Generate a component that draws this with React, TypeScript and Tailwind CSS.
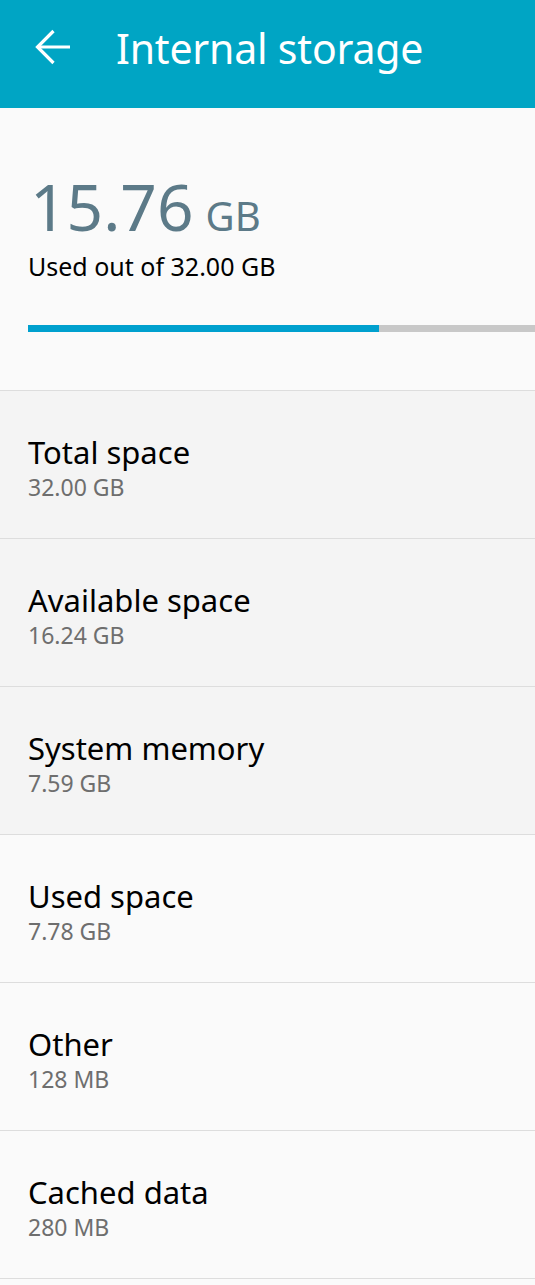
const rows = [
  { title: 'Total space', value: '32.00 GB', shaded: true },
  { title: 'Available space', value: '16.24 GB', shaded: true },
  { title: 'System memory', value: '7.59 GB', shaded: true },
  { title: 'Used space', value: '7.78 GB', shaded: false },
  { title: 'Other', value: '128 MB', shaded: false },
  { title: 'Cached data', value: '280 MB', shaded: false },
];

export default function App() {
  return (
    <div className="min-h-[1285px] w-[535px] bg-[#fafafa] font-['Noto_Sans',sans-serif]">
      <header className="h-[108px] bg-[#00a5c4] flex items-start text-white">
        <svg width="36" height="38" viewBox="0 0 36 38" className="mt-[28px] ml-[35px]" fill="none" stroke="currentColor" strokeWidth="3.2">
          <path d="M2 19H35" />
          <path d="M18.5 3L2.5 19L18.5 35" />
        </svg>
        <h1 className="ml-[45px] mt-[22px] text-[41px] leading-[52px] tracking-[-0.2px]">Internal storage</h1>
      </header>

      <section className="h-[282px] px-[28px] pt-[67px]">
        <div className="flex items-baseline gap-[12px] text-[#5c7a88] leading-none">
          <span className="text-[64px] ml-[2px]">15.76</span>
          <span className="text-[40px]">GB</span>
        </div>
        <p className="mt-[15px] text-[25px] text-black leading-none">Used out of 32.00 GB</p>
        <div className="mt-[46px] -mr-[28px] flex h-[7px]">
          <div className="w-[351px] bg-[#00a0ce]" />
          <div className="flex-1 bg-[#c8c8c8]" />
        </div>
      </section>

      <ul>
        {rows.map((r) => (
          <li
            key={r.title}
            className={`h-[148px] border-t border-[#dddddd] px-[28px] pt-[41px] flex flex-col ${
              r.shaded ? 'bg-[#f4f4f4]' : 'bg-[#fafafa]'
            }`}
          >
            <span className="text-[31px] leading-[40px] text-black">{r.title}</span>
            <span className="text-[23px] leading-[30px] text-[#6e6e6e]">{r.value}</span>
          </li>
        ))}
        <li className="border-t border-[#dddddd]" />
      </ul>
    </div>
  );
}
